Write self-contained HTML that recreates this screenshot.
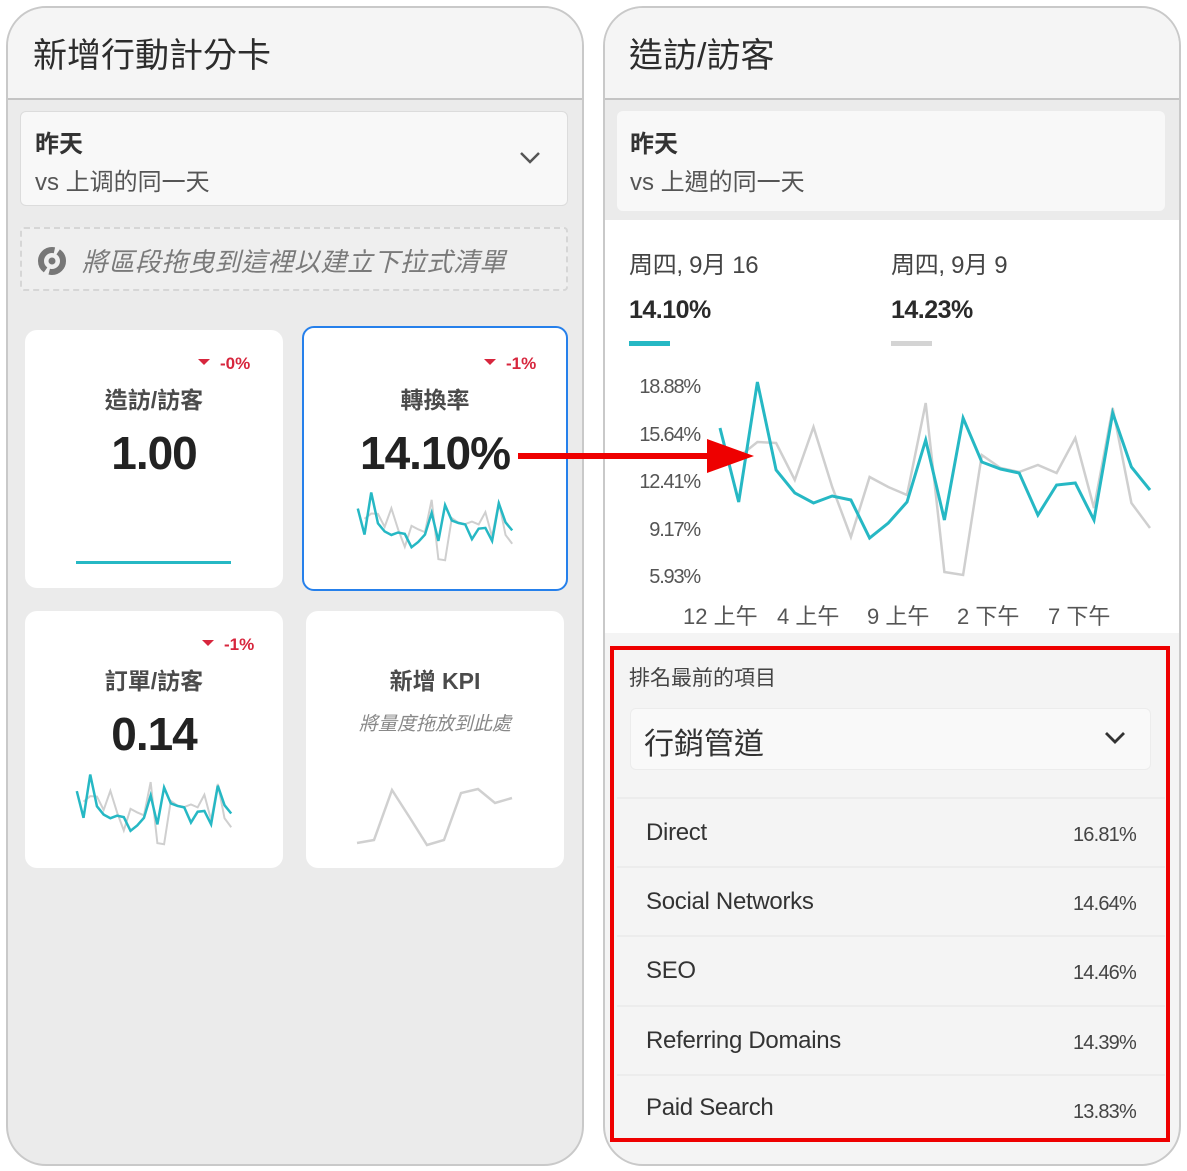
<!DOCTYPE html>
<html><head><meta charset="utf-8"><style>
*{margin:0;padding:0;box-sizing:border-box}
body{width:1187px;height:1171px;background:#fff;position:relative;overflow:hidden;font-family:"Liberation Sans","Noto Sans CJK TC",sans-serif;color:#2c2c2c}
.a{position:absolute}
.panel{position:absolute;border:2px solid #c9c9c9;border-radius:40px;background:#ebebeb;overflow:hidden}
.hdr{position:absolute;left:0;right:0;top:0;height:92px;background:#f5f5f5;border-bottom:2px solid #c4c4c4}
.card{position:absolute;background:#fff;border-radius:12px}
.delta{position:absolute;color:#d7263d;font-size:17px;font-weight:bold}
.tri{display:inline-block;width:0;height:0;border-left:6px solid transparent;border-right:6px solid transparent;border-top:6px solid #d7263d;margin-right:10px;vertical-align:4px}
.ctitle{position:absolute;left:0;right:0;text-align:center;font-size:23px;font-weight:bold;color:#4b4b4b}
.cval{position:absolute;left:0;right:0;text-align:center;font-size:46px;font-weight:bold;color:#222;letter-spacing:-1px}
.row{position:absolute;left:617px;width:548px;height:69px;border-top:2px solid #ececec}
.row .n{position:absolute;left:29px;top:20px;font-size:24px;color:#333;letter-spacing:-0.3px}
.row .v{position:absolute;right:29px;top:25px;font-size:20px;color:#444;letter-spacing:-0.8px}
</style></head><body>

<div class="panel" style="left:6px;top:6px;width:578px;height:1160px">
  <div class="hdr"></div>
</div>
<div class="a" style="left:33px;top:28px;font-size:34px;color:#2c2c2c">新增行動計分卡</div>

<div class="a" style="left:20px;top:111px;width:548px;height:95px;background:#f8f8f8;border:1px solid #dcdcdc;border-radius:6px"></div>
<div class="a" style="left:35px;top:124px;font-size:24px;font-weight:bold;color:#333">昨天</div>
<div class="a" style="left:35px;top:162px;font-size:24px;color:#555">vs 上调的同一天</div>
<svg class="a" style="left:518px;top:148px" width="24" height="20"><path d="M3 5 L12 14 L21 5" fill="none" stroke="#555" stroke-width="2.5"/></svg>

<div class="a" style="left:20px;top:227px;width:548px;height:64px;border:2px dashed #d6d6d6;border-radius:4px;background:#efefef"></div>
<svg class="a" style="left:36px;top:245px" width="34" height="34" viewBox="0 0 34 34"><circle cx="16" cy="16" r="11" fill="none" stroke="#777" stroke-width="6" stroke-dasharray="20 4 30 4 20 100"/><circle cx="16" cy="16" r="3.5" fill="#777"/></svg>
<div class="a" style="left:82px;top:242px;font-size:26px;font-style:italic;color:#7a7a7a;letter-spacing:0.5px">將區段拖曳到這裡以建立下拉式清單</div>

<div class="card" style="left:25px;top:330px;width:258px;height:258px"></div>
<div class="delta" style="left:198px;top:354px"><span class="tri"></span>-0%</div>
<div class="ctitle" style="left:25px;width:258px;top:381px">造訪/訪客</div>
<div class="cval" style="left:25px;width:258px;top:426px">1.00</div>
<div class="a" style="left:76px;top:561px;width:155px;height:3px;background:#26b8c4"></div>

<div class="card" style="left:302px;top:326px;width:266px;height:265px;border:2px solid #2680eb"></div>
<div class="delta" style="left:484px;top:354px"><span class="tri"></span>-1%</div>
<div class="ctitle" style="left:302px;width:266px;top:381px">轉換率</div>
<div class="cval" style="left:302px;width:266px;top:426px">14.10%</div>
<svg class="a" style="left:356px;top:490px" width="158" height="72" viewBox="715 375 440 205" preserveAspectRatio="none">
<polyline fill="none" stroke="#cfcfcf" stroke-width="2" vector-effect="non-scaling-stroke" points="738.7,457 757.4,442 776.1,443 794.8,480 813.5,427 832.2,487 850.9,537 869.6,477 888.3,487 907,495 925.7,403 944.4,572 963.1,575 981.8,455 1000.5,468 1019.2,472 1037.9,465 1056.6,473 1075.3,438 1094,508 1112.7,408 1131.4,503 1150,528"/>
<polyline fill="none" stroke="#26b8c4" stroke-width="2.5" vector-effect="non-scaling-stroke" points="720,428 738.7,502 757.4,382 776.1,470 794.8,493 813.5,503 832.2,496 850.9,500 869.6,538 888.3,523 907,502 925.7,440 944.4,520 963.1,418 981.8,462 1000.5,469 1019.2,473 1037.9,515 1056.6,485 1075.3,483 1094,520 1112.7,413 1131.4,467 1150,490"/>
</svg>

<div class="card" style="left:25px;top:611px;width:258px;height:257px"></div>
<div class="delta" style="left:202px;top:635px"><span class="tri"></span>-1%</div>
<div class="ctitle" style="left:25px;width:258px;top:662px">訂單/訪客</div>
<div class="cval" style="left:25px;width:258px;top:707px">0.14</div>
<svg class="a" style="left:75px;top:772px" width="158" height="74" viewBox="715 375 440 205" preserveAspectRatio="none">
<polyline fill="none" stroke="#cfcfcf" stroke-width="2" vector-effect="non-scaling-stroke" points="738.7,457 757.4,442 776.1,443 794.8,480 813.5,427 832.2,487 850.9,537 869.6,477 888.3,487 907,495 925.7,403 944.4,572 963.1,575 981.8,455 1000.5,468 1019.2,472 1037.9,465 1056.6,473 1075.3,438 1094,508 1112.7,408 1131.4,503 1150,528"/>
<polyline fill="none" stroke="#26b8c4" stroke-width="2.5" vector-effect="non-scaling-stroke" points="720,428 738.7,502 757.4,382 776.1,470 794.8,493 813.5,503 832.2,496 850.9,500 869.6,538 888.3,523 907,502 925.7,440 944.4,520 963.1,418 981.8,462 1000.5,469 1019.2,473 1037.9,515 1056.6,485 1075.3,483 1094,520 1112.7,413 1131.4,467 1150,490"/>
</svg>

<div class="card" style="left:306px;top:611px;width:258px;height:257px"></div>
<div class="ctitle" style="left:306px;width:258px;top:662px">新增 KPI</div>
<div class="a" style="left:306px;width:258px;top:709px;text-align:center;font-size:19px;font-style:italic;color:#888">將量度拖放到此處</div>
<svg class="a" style="left:0;top:0" width="600" height="900"><polyline fill="none" stroke="#d0d0d0" stroke-width="2.5" points="357,843 374,840 392,790 410,818 427,845 444,840 461,793 478,789 495,803 512,798"/></svg>

<div class="panel" style="left:603px;top:6px;width:578px;height:1160px;background:#f4f4f4">
  <div class="hdr"></div>
</div>
<div class="a" style="left:629px;top:28px;font-size:34px;color:#2c2c2c">造訪/訪客</div>
<div class="a" style="left:605px;top:100px;width:574px;height:120px;background:#ebebeb"></div>
<div class="a" style="left:617px;top:111px;width:548px;height:100px;background:#f8f8f8;border-radius:6px"></div>
<div class="a" style="left:630px;top:124px;font-size:24px;font-weight:bold;color:#333">昨天</div>
<div class="a" style="left:630px;top:162px;font-size:24px;color:#555">vs 上週的同一天</div>

<div class="a" style="left:605px;top:220px;width:574px;height:413px;background:#fff"></div>
<div class="a" style="left:629px;top:245px;font-size:24px;color:#444;letter-spacing:-0.3px">周四, 9月 16</div>
<div class="a" style="left:891px;top:245px;font-size:24px;color:#444;letter-spacing:-0.3px">周四, 9月 9</div>
<div class="a" style="left:629px;top:296px;font-size:25px;font-weight:bold;color:#2a2a2a;letter-spacing:-0.5px">14.10%</div>
<div class="a" style="left:891px;top:296px;font-size:25px;font-weight:bold;color:#2a2a2a;letter-spacing:-0.5px">14.23%</div>
<div class="a" style="left:629px;top:341px;width:41px;height:5px;background:#26b8c4"></div>
<div class="a" style="left:891px;top:341px;width:41px;height:5px;background:#d4d4d4"></div>

<div class="a" style="right:487px;top:364px;font-size:20px;color:#555;text-align:right;line-height:47.5px;letter-spacing:-1.2px">18.88%<br>15.64%<br>12.41%<br>9.17%<br>5.93%</div>
<div class="a" style="left:683px;top:599px;font-size:22px;color:#555;white-space:nowrap">12 上午</div>
<div class="a" style="left:777px;top:599px;font-size:22px;color:#555">4 上午</div>
<div class="a" style="left:867px;top:599px;font-size:22px;color:#555">9 上午</div>
<div class="a" style="left:957px;top:599px;font-size:22px;color:#555">2 下午</div>
<div class="a" style="left:1048px;top:599px;font-size:22px;color:#555">7 下午</div>

<svg class="a" style="left:0;top:0" width="1187" height="640">
<polyline fill="none" stroke="#cfcfcf" stroke-width="2.5" points="738.7,457 757.4,442 776.1,443 794.8,480 813.5,427 832.2,487 850.9,537 869.6,477 888.3,487 907,495 925.7,403 944.4,572 963.1,575 981.8,455 1000.5,468 1019.2,472 1037.9,465 1056.6,473 1075.3,438 1094,508 1112.7,408 1131.4,503 1150,528"/>
<polyline fill="none" stroke="#26b8c4" stroke-width="3" points="720,428 738.7,502 757.4,382 776.1,470 794.8,493 813.5,503 832.2,496 850.9,500 869.6,538 888.3,523 907,502 925.7,440 944.4,520 963.1,418 981.8,462 1000.5,469 1019.2,473 1037.9,515 1056.6,485 1075.3,483 1094,520 1112.7,413 1131.4,467 1150,490"/>
<rect x="518" y="453" width="192" height="6" fill="#ee0000"/>
<polygon points="707,439 754,456 707,473" fill="#ee0000"/>
</svg>

<div class="a" style="left:629px;top:662px;font-size:21px;color:#444">排名最前的項目</div>
<div class="a" style="left:630px;top:708px;width:521px;height:62px;background:#f9f9f9;border:1px solid #ececec;border-radius:6px"></div>
<div class="a" style="left:644px;top:719px;font-size:30px;color:#333">行銷管道</div>
<svg class="a" style="left:1102px;top:728px" width="26" height="20"><path d="M4 5 L13 14 L22 5" fill="none" stroke="#333" stroke-width="2.8"/></svg>

<div class="row" style="top:797px"><span class="n">Direct</span><span class="v">16.81%</span></div>
<div class="row" style="top:866px"><span class="n">Social Networks</span><span class="v">14.64%</span></div>
<div class="row" style="top:935px"><span class="n">SEO</span><span class="v">14.46%</span></div>
<div class="row" style="top:1005px"><span class="n">Referring Domains</span><span class="v">14.39%</span></div>
<div class="row" style="top:1074px;height:66px"><span class="n" style="top:18px">Paid Search</span><span class="v">13.83%</span></div>

<div class="a" style="left:610px;top:646px;width:560px;height:496px;border:4px solid #ee0000"></div>
</body></html>
